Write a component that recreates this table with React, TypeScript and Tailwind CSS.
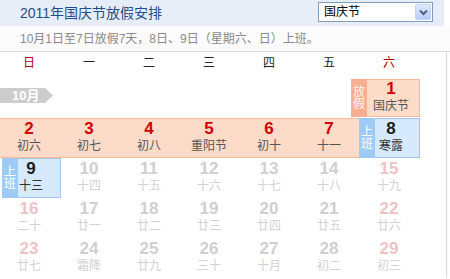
import React from "react";

type Kind = "cur" | "fut" | "futwk";
type Day = { d: number; l: string; k: Kind };

const row3: Day[] = [
  { d: 10, l: "十四", k: "fut" },
  { d: 11, l: "十五", k: "fut" },
  { d: 12, l: "十六", k: "fut" },
  { d: 13, l: "十七", k: "fut" },
  { d: 14, l: "十八", k: "fut" },
  { d: 15, l: "十九", k: "futwk" },
];
const row4: Day[] = [
  { d: 16, l: "二十", k: "futwk" },
  { d: 17, l: "廿一", k: "fut" },
  { d: 18, l: "廿二", k: "fut" },
  { d: 19, l: "廿三", k: "fut" },
  { d: 20, l: "廿四", k: "fut" },
  { d: 21, l: "廿五", k: "fut" },
  { d: 22, l: "廿六", k: "futwk" },
];
const row5: Day[] = [
  { d: 23, l: "廿七", k: "futwk" },
  { d: 24, l: "霜降", k: "fut" },
  { d: 25, l: "廿九", k: "fut" },
  { d: 26, l: "三十", k: "fut" },
  { d: 27, l: "十月", k: "fut" },
  { d: 28, l: "初二", k: "fut" },
  { d: 29, l: "初三", k: "futwk" },
];
const row2: Day[] = [
  { d: 2, l: "初六", k: "cur" },
  { d: 3, l: "初七", k: "cur" },
  { d: 4, l: "初八", k: "cur" },
  { d: 5, l: "重阳节", k: "cur" },
  { d: 6, l: "初十", k: "cur" },
  { d: 7, l: "十一", k: "cur" },
];

const numColor: Record<Kind, string> = {
  cur: "text-[#d20000]",
  fut: "text-[#cfcfcf]",
  futwk: "text-[#f0c3c3]",
};
const lunColor: Record<Kind, string> = {
  cur: "text-[#555555]",
  fut: "text-[#d2d2d2]",
  futwk: "text-[#d2d2d2]",
};

function Content({ d, l, num, lun, shift = "pr-[2px]" }: { d: number; l: string; num: string; lun: string; shift?: string }) {
  return (
    <div className={`relative flex flex-col items-center ${shift}`}>
      <div className={`text-[17px] leading-[18px] font-bold ${num}`}>{d}</div>
      <div className={`text-[12px] leading-[14px] mt-[1px] whitespace-nowrap ${lun}`}>{l}</div>
    </div>
  );
}

function Cell({ day }: { day: Day }) {
  return (
    <div className="w-[60px] h-[40px] pt-[2px]">
      <Content d={day.d} l={day.l} num={numColor[day.k]} lun={lunColor[day.k]} />
    </div>
  );
}

function Strip({ text, bg, color }: { text: string; bg: string; color: string }) {
  return (
    <div className={`absolute left-0 top-0 bottom-0 w-[16px] flex flex-col items-center justify-center text-[12px] leading-[12px] ${bg} ${color}`}>
      {text.split("").map((c, i) => (
        <span key={i}>{c}</span>
      ))}
    </div>
  );
}

function WorkCell({ d, l, boxClass, shift }: { d: number; l: string; boxClass: string; shift: string }) {
  return (
    <div className="relative w-[60px] h-[40px] pt-[2px]">
      <div className={`absolute top-0 bottom-0 bg-[#d7e9fd] border border-[#9fc7ef] ${boxClass}`}>
        <div className="absolute left-[-1px] top-[-1px] bottom-[-1px] w-[16px]">
          <Strip text="上班" bg="bg-[#9ecbf6]" color="text-white" />
        </div>
      </div>
      <Content d={d} l={l} num="text-[#1e1e1e]" lun="text-[#333333]" shift={shift} />
    </div>
  );
}

export default function App() {
  return (
    <div className="w-[450px] h-[279px] overflow-hidden bg-white font-['Liberation_Sans','Noto_Sans_CJK_SC',sans-serif]">
      {/* header */}
      <div className="w-[444px] h-[26px] bg-[#e6edf7] flex items-center justify-between pl-[20px] pr-[11px]">
        <div className="text-[14px] leading-[16px] text-[#1f4d8b] mt-[-1px]">2011年国庆节放假安排</div>
        <div className="w-[115px] h-[20px] mt-[-2px] border border-[#7f9db9] bg-white flex items-center justify-between pl-[5px] pr-[1px]">
          <span className="text-[12px] leading-[14px] text-black">国庆节</span>
          <div className="w-[16px] h-[16px] bg-gradient-to-b from-[#dfe9fd] to-[#b7cbf5] border border-[#c3d3fd] rounded-[2px] flex items-center justify-center">
            <svg width="9" height="7" viewBox="0 0 9 7">
              <path d="M1 1.5 L4.5 5 L8 1.5" stroke="#4d6185" strokeWidth="2" fill="none" />
            </svg>
          </div>
        </div>
      </div>
      {/* subtitle */}
      <div className="h-[26px] bg-[#fbfbfb] border-b border-[#dcdcdc] flex items-center pl-[20px]">
        <span className="text-[12px] leading-[14px] text-[#8a8a8a]">10月1日至7日放假7天，8日、9日（星期六、日）上班。</span>
      </div>
      {/* body */}
      <div className="w-[447px] border-r border-[#c8dcf2]">
        <div className="flex h-[22px] mb-[4px] items-center text-[12px] leading-[14px]">
          {["日", "一", "二", "三", "四", "五", "六"].map((w, i) => (
            <div key={w} className={`w-[60px] text-center pr-[2px] ${i === 0 || i === 6 ? "text-[#a80000]" : "text-[#222222]"}`}>
              {w}
            </div>
          ))}
        </div>
        {/* row 1 */}
        <div className="flex h-[40px]">
          <div className="w-[360px] pt-[10px]">
            <div className="w-[53px] h-[15px] bg-[#cccccc] [clip-path:polygon(0_0,45px_0,53px_50%,45px_100%,0_100%)] flex items-center pl-[12px]">
              <span className="text-[13px] leading-[14px] font-bold text-white">10月</span>
            </div>
          </div>
          <div className="relative w-[60px] h-[40px] pt-[2px]">
            <div className="absolute left-[-9px] right-0 top-[1px] h-[38px] bg-[#fddbc9] border border-[#f7b89b]">
              <div className="absolute left-[-1px] top-[-1px] bottom-[-1px] w-[16px]">
                <Strip text="放假" bg="bg-[#f8ae91]" color="text-[#fff4ef]" />
              </div>
            </div>
            <Content d={1} l="国庆节" num="text-[#d20000]" lun="text-[#555555]" shift="pl-[2px]" />
          </div>
        </div>
        {/* row 2 */}
        <div className="flex h-[40px]">
          <div className="flex w-[360px] h-[40px] bg-[#fddbc9] border-y border-[#f8b99c]">
            {row2.map((d) => (
              <div key={d.d} className="w-[60px] pt-[1px]">
                <Content d={d.d} l={d.l} num={numColor[d.k]} lun={lunColor[d.k]} />
              </div>
            ))}
          </div>
          <WorkCell d={8} l="寒露" boxClass="left-[-1px] right-0" shift="pl-[2px]" />
        </div>
        {/* row 3 */}
        <div className="flex h-[40px]">
          <WorkCell d={9} l="十三" boxClass="left-[2px] right-[-1px]" shift="pl-[2px]" />
          {row3.map((d) => (
            <Cell key={d.d} day={d} />
          ))}
        </div>
        <div className="flex h-[40px]">
          {row4.map((d) => (
            <Cell key={d.d} day={d} />
          ))}
        </div>
        <div className="flex h-[40px]">
          {row5.map((d) => (
            <Cell key={d.d} day={d} />
          ))}
        </div>
      </div>
    </div>
  );
}
